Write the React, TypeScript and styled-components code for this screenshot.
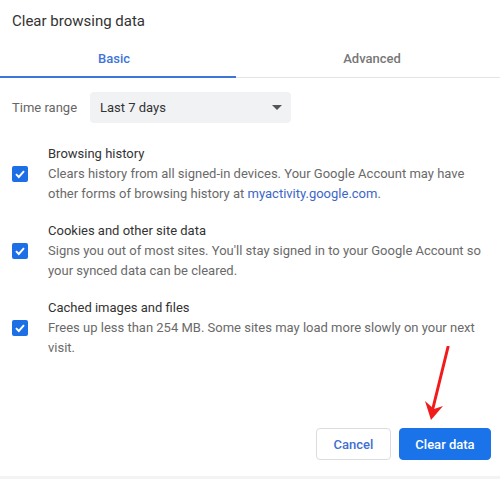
import React from 'react';
import styled, { createGlobalStyle } from 'styled-components';

const GlobalStyle = createGlobalStyle`
  html, body {
    margin: 0;
    padding: 0;
    background: #fff;
  }
  body {
    font-family: Roboto, 'Liberation Sans', sans-serif;
    -webkit-font-smoothing: antialiased;
  }
`;

const Dialog = styled.div`
  width: 500px;
  height: 479px;
  display: flex;
  flex-direction: column;
  background: #fff;
  overflow: hidden;
`;

const Title = styled.h1`
  margin: 0;
  box-sizing: border-box;
  padding: 11px 12px 0;
  height: 40px;
  font-size: 15px;
  font-weight: 400;
  color: #333;
  line-height: 20px;
`;

const Tabs = styled.div`
  display: flex;
  height: 38px;
  box-sizing: border-box;
  border-bottom: 1px solid #e4e4e4;
`;

const Tab = styled.div<{ $active?: boolean }>`
  flex: 1;
  display: flex;
  align-items: center;
  justify-content: center;
  padding: 1px 0 0 8px;
  font-size: 13px;
  font-weight: 500;
  color: ${(p) => (p.$active ? '#3f74d9' : '#777')};
  border-bottom: 2px solid ${(p) => (p.$active ? '#3f74d9' : 'transparent')};
  margin-bottom: -1px;
  box-sizing: border-box;
  &:first-child {
    flex: 0 0 236px;
    padding: 1px 8px 0 0;
  }
`;

const Body = styled.div`
  padding: 14px 12px 0;
  flex: 1;
`;

const TimeRow = styled.div`
  display: flex;
  align-items: center;
  margin-bottom: 21px;
`;

const Label = styled.span`
  width: 78px;
  font-size: 13px;
  color: #666;
`;

const Select = styled.div`
  width: 201px;
  height: 31px;
  box-sizing: border-box;
  padding: 0 8px 0 10px;
  border-radius: 4px;
  background: #f1f2f3;
  display: flex;
  align-items: center;
  justify-content: space-between;
  font-size: 13px;
  color: #333;
`;

const Caret = styled.span`
  width: 0;
  height: 0;
  margin-right: 1px;
  border-left: 5px solid transparent;
  border-right: 5px solid transparent;
  border-top: 5px solid #555;
`;

const Item = styled.div`
  display: flex;
  align-items: flex-start;
  margin-bottom: 17px;
`;

const Check = styled.div`
  width: 16px;
  height: 16px;
  margin-top: 22px;
  margin-right: 20px;
  border-radius: 2px;
  background: #1d6fe5;
  display: flex;
  align-items: center;
  justify-content: center;
  flex-shrink: 0;
`;

const ItemText = styled.div`
  flex: 1;
`;

const ItemTitle = styled.div`
  font-size: 13px;
  line-height: 20px;
  color: #333;
`;

const ItemDesc = styled.div`
  font-size: 13px;
  line-height: 20px;
  color: #6a6a6a;
`;

const Link = styled.span`
  color: #3d66c8;
`;

const Footer = styled.div`
  position: relative;
  display: flex;
  justify-content: flex-end;
  align-items: center;
  gap: 8px;
  padding: 0 9px 16px 0;
`;

const Button = styled.button<{ $primary?: boolean }>`
  height: 32px;
  padding: 0;
  border-radius: 4px;
  font-family: Roboto, 'Liberation Sans', sans-serif;
  font-size: 13px;
  font-weight: 500;
  border: 1px solid ${(p) => (p.$primary ? '#1a73e8' : '#dadce0')};
  background: ${(p) => (p.$primary ? '#1a73e8' : '#fff')};
  color: ${(p) => (p.$primary ? '#fff' : '#3f6fd1')};
  width: ${(p) => (p.$primary ? '92px' : '75px')};
`;

const Arrow = styled.svg`
  position: absolute;
  right: 48px;
  bottom: 50px;
`;

const BottomStrip = styled.div`
  height: 3px;
  background: #f3f3f3;
`;

const items = [
  {
    title: 'Browsing history',
    text: (
      <>
        Clears history from all signed-in devices. Your Google Account may have other forms of browsing history at{' '}
        <Link>myactivity.google.com</Link>.
      </>
    ),
  },
  {
    title: 'Cookies and other site data',
    text: <>Signs you out of most sites. You'll stay signed in to your Google Account so your synced data can be cleared.</>,
  },
  {
    title: 'Cached images and files',
    text: <>Frees up less than 254 MB. Some sites may load more slowly on your next visit.</>,
  },
];

export default function App() {
  return (
    <>
      <GlobalStyle />
      <Dialog>
        <Title>Clear browsing data</Title>
        <Tabs>
          <Tab $active>Basic</Tab>
          <Tab>Advanced</Tab>
        </Tabs>
        <Body>
          <TimeRow>
            <Label>Time range</Label>
            <Select>
              <span>Last 7 days</span>
              <Caret />
            </Select>
          </TimeRow>
          {items.map((it) => (
            <Item key={it.title}>
              <Check>
                <svg width="12" height="12" viewBox="0 0 12 12">
                  <path d="M2 6.2 L4.8 9 L10 3.2" fill="none" stroke="#fff" strokeWidth="1.9" />
                </svg>
              </Check>
              <ItemText>
                <ItemTitle>{it.title}</ItemTitle>
                <ItemDesc>{it.text}</ItemDesc>
              </ItemText>
            </Item>
          ))}
        </Body>
        <Footer>
          <Arrow width="32" height="80" viewBox="0 0 32 80">
            <path d="M28 1 L13 62" stroke="#f21b1b" strokeWidth="3" strokeLinecap="round" />
            <path d="M5 55 L11 74 L23 60 L14 63 Z" fill="#f21b1b" />
          </Arrow>
          <Button>Cancel</Button>
          <Button $primary>Clear data</Button>
        </Footer>
        <BottomStrip />
      </Dialog>
    </>
  );
}
